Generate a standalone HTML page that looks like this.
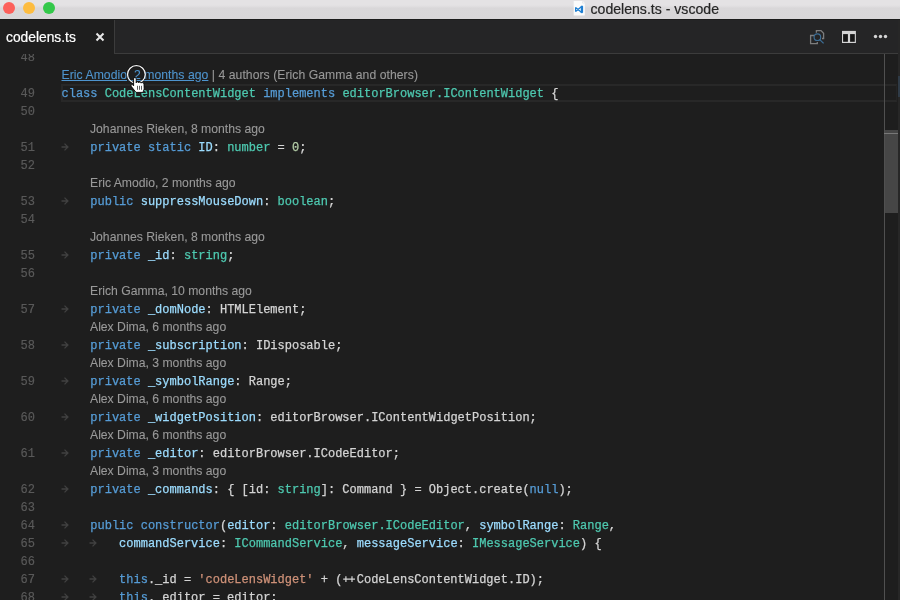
<!DOCTYPE html>
<html><head><meta charset="utf-8">
<style>
html,body{margin:0;padding:0;width:900px;height:600px;overflow:hidden;background:#1e1e1e;position:relative}
#root{position:absolute;left:0;top:0;width:900px;height:600px;will-change:transform}
.abs{position:absolute}
#title{left:0;top:0;width:900px;height:19px;background:linear-gradient(#e4e2e4 0,#e4e2e4 5px,#dedcde 7px,#d9d7d9 8px,#d8d6d8 19px)}
#titleline{left:0;top:19px;width:900px;height:1px;background:#1b1b1b}
.dot{width:12px;height:12px;border-radius:50%;top:2px}
#ttext{left:590.5px;top:-0.5px;font:14.1px/18px "Liberation Sans",sans-serif;color:#262626;-webkit-text-stroke:0.2px;white-space:pre}
#tabbar{left:114px;top:20px;width:784px;height:33px;background:#252526;border-left:1px solid #3c3c3c;border-bottom:1px solid #3c3c3c;box-sizing:border-box;height:34px}
#tabtext{left:6px;top:28px;font:13.8px/20px "Liberation Sans",sans-serif;color:#ffffff;-webkit-text-stroke:0.2px;white-space:pre}
.ln{position:absolute;left:0;width:35px;margin-top:1px;-webkit-text-stroke:0.15px;text-align:right;font:12px/18px "Liberation Mono",monospace;color:#5a5a5a;white-space:pre}
.code{position:absolute;left:61.5px;margin-top:1px;-webkit-text-stroke:0.25px;font:12px/18px "Liberation Mono",monospace;color:#d4d4d4;white-space:pre}
.cl{position:absolute;font:12.2px/18px "Liberation Sans",sans-serif;color:#999999;-webkit-text-stroke:0.1px;white-space:pre}
.k{color:#569cd6}.t{color:#4ec9b0}.v{color:#9cdcfe}.n{color:#b5cea8}.s{color:#ce9178}
.arr{display:inline-block;vertical-align:top;margin-top:-1px}
</style></head><body><div id="root">
<div id="title" class="abs"></div>
<div id="titleline" class="abs"></div>
<div class="abs dot" style="left:3px;background:#fc605b"></div>
<div class="abs dot" style="left:23px;background:#fdbc40"></div>
<div class="abs dot" style="left:43px;background:#34c84a"></div>
<svg class="abs" style="left:568px;top:0" width="20" height="18" viewBox="0 0 20 18">
<path d="M5.7 1H14.8L16.8 3V15.4H5.7Z" fill="#fbfbfb"/>
<path d="M14.6 1.2V3.2H16.6" fill="none" stroke="#d8d8d8" stroke-width="0.5"/>
<path d="M7.6 7.3V11.8 M8 7.8L13.6 12.5 M8 11.3L13.6 6.5" fill="none" stroke="#1e7fd2" stroke-width="1.2"/>
<path d="M12.8 5.9L14.1 5.6L15.1 6.3V12.5L14.1 13.2L12.8 12.9Z" fill="#1e7fd2"/>
</svg>
<div id="ttext" class="abs">codelens.ts - vscode</div>

<div id="tabbar" class="abs"></div>
<div id="tabtext" class="abs">codelens.ts</div>
<svg class="abs" style="left:95px;top:32px" width="10" height="10" viewBox="0 0 10 10"><path d="M1.5 1.5 L8.5 8.5 M8.5 1.5 L1.5 8.5" stroke="#e8e8e8" stroke-width="2"/></svg>

<div id="editor" class="abs" style="left:0;top:54px;width:900px;height:546px;overflow:hidden">
<div style="position:absolute;left:0;top:-54px;width:900px;height:600px">
<!-- current line box -->
<div class="abs" style="left:61px;top:84px;width:836px;height:18px;box-sizing:border-box;border:2px solid #282828;border-right:1px solid #242424"></div>

<div class="ln" style="top:48px">48</div>
<div class="cl" style="top:66px;left:61.5px;letter-spacing:0.05px"><span style="color:#4e94ce;text-decoration:underline">Eric Amodio, 2 months ago</span> | 4 authors (Erich Gamma and others)</div>
<div class="ln" style="top:84px">49</div><div class="code" style="top:84px"><span class="k">class</span> <span class="t">CodeLensContentWidget</span> <span class="k">implements</span> <span class="t">editorBrowser.IContentWidget</span> {</div>
<div class="ln" style="top:102px">50</div>
<div class="cl" style="top:120px;left:90px">Johannes Rieken, 8 months ago</div>
<div class="ln" style="top:138px">51</div><div class="code" style="top:138px"><svg class="arr" width="28.8" height="18" viewBox="0 0 28.8 18" style="overflow:visible"><path d="M-0.5 9H5.6 M2.5 5.6L5.9 9L2.5 12.4" fill="none" stroke="#414141" stroke-width="1.3"/></svg><span class="k">private</span> <span class="k">static</span> <span class="v">ID</span>: <span class="t">number</span> = <span class="n">0</span>;</div>
<div class="ln" style="top:156px">52</div>
<div class="cl" style="top:174px;left:90px">Eric Amodio, 2 months ago</div>
<div class="ln" style="top:192px">53</div><div class="code" style="top:192px"><svg class="arr" width="28.8" height="18" viewBox="0 0 28.8 18" style="overflow:visible"><path d="M-0.5 9H5.6 M2.5 5.6L5.9 9L2.5 12.4" fill="none" stroke="#414141" stroke-width="1.3"/></svg><span class="k">public</span> <span class="v">suppressMouseDown</span>: <span class="t">boolean</span>;</div>
<div class="ln" style="top:210px">54</div>
<div class="cl" style="top:228px;left:90px">Johannes Rieken, 8 months ago</div>
<div class="ln" style="top:246px">55</div><div class="code" style="top:246px"><svg class="arr" width="28.8" height="18" viewBox="0 0 28.8 18" style="overflow:visible"><path d="M-0.5 9H5.6 M2.5 5.6L5.9 9L2.5 12.4" fill="none" stroke="#414141" stroke-width="1.3"/></svg><span class="k">private</span> <span class="v">_id</span>: <span class="t">string</span>;</div>
<div class="ln" style="top:264px">56</div>
<div class="cl" style="top:282px;left:90px">Erich Gamma, 10 months ago</div>
<div class="ln" style="top:300px">57</div><div class="code" style="top:300px"><svg class="arr" width="28.8" height="18" viewBox="0 0 28.8 18" style="overflow:visible"><path d="M-0.5 9H5.6 M2.5 5.6L5.9 9L2.5 12.4" fill="none" stroke="#414141" stroke-width="1.3"/></svg><span class="k">private</span> <span class="v">_domNode</span>: HTMLElement;</div>
<div class="cl" style="top:318px;left:90px">Alex Dima, 6 months ago</div>
<div class="ln" style="top:336px">58</div><div class="code" style="top:336px"><svg class="arr" width="28.8" height="18" viewBox="0 0 28.8 18" style="overflow:visible"><path d="M-0.5 9H5.6 M2.5 5.6L5.9 9L2.5 12.4" fill="none" stroke="#414141" stroke-width="1.3"/></svg><span class="k">private</span> <span class="v">_subscription</span>: IDisposable;</div>
<div class="cl" style="top:354px;left:90px">Alex Dima, 3 months ago</div>
<div class="ln" style="top:372px">59</div><div class="code" style="top:372px"><svg class="arr" width="28.8" height="18" viewBox="0 0 28.8 18" style="overflow:visible"><path d="M-0.5 9H5.6 M2.5 5.6L5.9 9L2.5 12.4" fill="none" stroke="#414141" stroke-width="1.3"/></svg><span class="k">private</span> <span class="v">_symbolRange</span>: Range;</div>
<div class="cl" style="top:390px;left:90px">Alex Dima, 6 months ago</div>
<div class="ln" style="top:408px">60</div><div class="code" style="top:408px"><svg class="arr" width="28.8" height="18" viewBox="0 0 28.8 18" style="overflow:visible"><path d="M-0.5 9H5.6 M2.5 5.6L5.9 9L2.5 12.4" fill="none" stroke="#414141" stroke-width="1.3"/></svg><span class="k">private</span> <span class="v">_widgetPosition</span>: editorBrowser.IContentWidgetPosition;</div>
<div class="cl" style="top:426px;left:90px">Alex Dima, 6 months ago</div>
<div class="ln" style="top:444px">61</div><div class="code" style="top:444px"><svg class="arr" width="28.8" height="18" viewBox="0 0 28.8 18" style="overflow:visible"><path d="M-0.5 9H5.6 M2.5 5.6L5.9 9L2.5 12.4" fill="none" stroke="#414141" stroke-width="1.3"/></svg><span class="k">private</span> <span class="v">_editor</span>: editorBrowser.ICodeEditor;</div>
<div class="cl" style="top:462px;left:90px">Alex Dima, 3 months ago</div>
<div class="ln" style="top:480px">62</div><div class="code" style="top:480px"><svg class="arr" width="28.8" height="18" viewBox="0 0 28.8 18" style="overflow:visible"><path d="M-0.5 9H5.6 M2.5 5.6L5.9 9L2.5 12.4" fill="none" stroke="#414141" stroke-width="1.3"/></svg><span class="k">private</span> <span class="v">_commands</span>: { [id: <span class="t">string</span>]: Command } = Object.create(<span class="k">null</span>);</div>
<div class="ln" style="top:498px">63</div>
<div class="ln" style="top:516px">64</div><div class="code" style="top:516px"><svg class="arr" width="28.8" height="18" viewBox="0 0 28.8 18" style="overflow:visible"><path d="M-0.5 9H5.6 M2.5 5.6L5.9 9L2.5 12.4" fill="none" stroke="#414141" stroke-width="1.3"/></svg><span class="k">public</span> <span class="k">constructor</span>(<span class="v">editor</span>: <span class="t">editorBrowser.ICodeEditor</span>, <span class="v">symbolRange</span>: <span class="t">Range</span>,</div>
<div class="ln" style="top:534px">65</div><div class="code" style="top:534px"><svg class="arr" width="28.8" height="18" viewBox="0 0 28.8 18" style="overflow:visible"><path d="M-0.5 9H5.6 M2.5 5.6L5.9 9L2.5 12.4" fill="none" stroke="#414141" stroke-width="1.3"/></svg><svg class="arr" width="28.8" height="18" viewBox="0 0 28.8 18" style="overflow:visible"><path d="M-0.5 9H5.6 M2.5 5.6L5.9 9L2.5 12.4" fill="none" stroke="#414141" stroke-width="1.3"/></svg><span class="v">commandService</span>: <span class="t">ICommandService</span>, <span class="v">messageService</span>: <span class="t">IMessageService</span>) {</div>
<div class="ln" style="top:552px">66</div>
<div class="ln" style="top:570px">67</div><div class="code" style="top:570px"><svg class="arr" width="28.8" height="18" viewBox="0 0 28.8 18" style="overflow:visible"><path d="M-0.5 9H5.6 M2.5 5.6L5.9 9L2.5 12.4" fill="none" stroke="#414141" stroke-width="1.3"/></svg><svg class="arr" width="28.8" height="18" viewBox="0 0 28.8 18" style="overflow:visible"><path d="M-0.5 9H5.6 M2.5 5.6L5.9 9L2.5 12.4" fill="none" stroke="#414141" stroke-width="1.3"/></svg><span class="k">this</span>._id = <span class="s">'codeLensWidget'</span> + (<svg class="arr" width="14.4" height="18" viewBox="0 0 14.4 18"><path d="M1.2 9.2H13M3.9 6.2V12M10 6.2V12" stroke="#d4d4d4" stroke-width="1.2"/></svg>CodeLensContentWidget.ID);</div>
<div class="ln" style="top:588px">68</div><div class="code" style="top:588px"><svg class="arr" width="28.8" height="18" viewBox="0 0 28.8 18" style="overflow:visible"><path d="M-0.5 9H5.6 M2.5 5.6L5.9 9L2.5 12.4" fill="none" stroke="#414141" stroke-width="1.3"/></svg><svg class="arr" width="28.8" height="18" viewBox="0 0 28.8 18" style="overflow:visible"><path d="M-0.5 9H5.6 M2.5 5.6L5.9 9L2.5 12.4" fill="none" stroke="#414141" stroke-width="1.3"/></svg><span class="k">this</span>._editor = editor;</div>

<!-- ruler & scrollbar -->
<div class="abs" style="left:885px;top:130px;width:13px;height:83px;background:#464646"></div>
<div class="abs" style="left:884px;top:54px;width:1px;height:546px;background:#505050"></div>
<div class="abs" style="left:884px;top:133px;width:14px;height:1px;background:#787878"></div>
</div>
</div>

<div class="abs" style="left:898px;top:20px;width:2px;height:580px;background:#272727"></div>
<div class="abs" style="left:898px;top:76px;width:2px;height:21px;background:#2f3b47"></div>
<!-- mouse -->
<svg class="abs" style="left:122px;top:60px" width="30" height="35" viewBox="0 0 30 35">
<circle cx="14.4" cy="14.4" r="9.8" fill="none" stroke="rgba(0,0,0,0.55)" stroke-width="0.9"/>
<circle cx="14.4" cy="14.4" r="8.8" fill="none" stroke="#f4f4f4" stroke-width="1.4"/>
<circle cx="14.4" cy="14.4" r="7.8" fill="none" stroke="rgba(0,0,0,0.5)" stroke-width="0.7"/>
<path d="M11.6 25.8V19Q11.6 17.4 12.9 17.4Q14.2 17.4 14.2 19V22.8Q14.2 21.8 15.4 21.8Q16.6 21.8 16.6 22.8Q16.6 22.1 17.8 22.1Q19 22.1 19 23.1Q19 22.6 20.4 22.6Q21.8 22.6 22 24L22.2 29L21 32.4H14L9.4 26.6Q8.6 25.2 9.6 24.6Q10.5 24.2 11.6 25.8Z" fill="#ffffff" stroke="#000" stroke-width="0.9" stroke-linejoin="round"/>
<path d="M15.5 25.8V29.8M17.5 25.8V29.8M19.5 25.8V29.8" stroke="#2a2a2a" stroke-width="0.75"/>
</svg>
<!-- top right icons -->
<svg class="abs" style="left:806px;top:26px" width="24" height="22" viewBox="0 0 24 22">
<path d="M10.4 6.8V4.6H15L17.6 7.3V12.5H16 M8 9.5H4.6V17.6H11.3V16" fill="none" stroke="#7d7d7d" stroke-width="1.3"/>
<circle cx="11.4" cy="11.2" r="3.3" fill="none" stroke="#3d6e96" stroke-width="1.15"/>
<path d="M13.8 13.6L17.6 17.4" stroke="#3d6e96" stroke-width="1.3"/>
</svg>
<svg class="abs" style="left:838px;top:26px" width="24" height="22" viewBox="0 0 24 22">
<rect x="4" y="4.9" width="13.9" height="12.1" fill="#d4d4d4"/>
<rect x="5.1" y="8.1" width="4.8" height="7.7" fill="#161616"/>
<rect x="12.1" y="8.1" width="4.7" height="7.7" fill="#161616"/>
</svg>
<svg class="abs" style="left:870px;top:30px" width="22" height="14" viewBox="0 0 22 14">
<circle cx="5.5" cy="6.5" r="1.7" fill="#d4d4d4"/><circle cx="10.5" cy="6.5" r="1.7" fill="#d4d4d4"/><circle cx="15.5" cy="6.5" r="1.7" fill="#d4d4d4"/>
</svg>
</div></body></html>
